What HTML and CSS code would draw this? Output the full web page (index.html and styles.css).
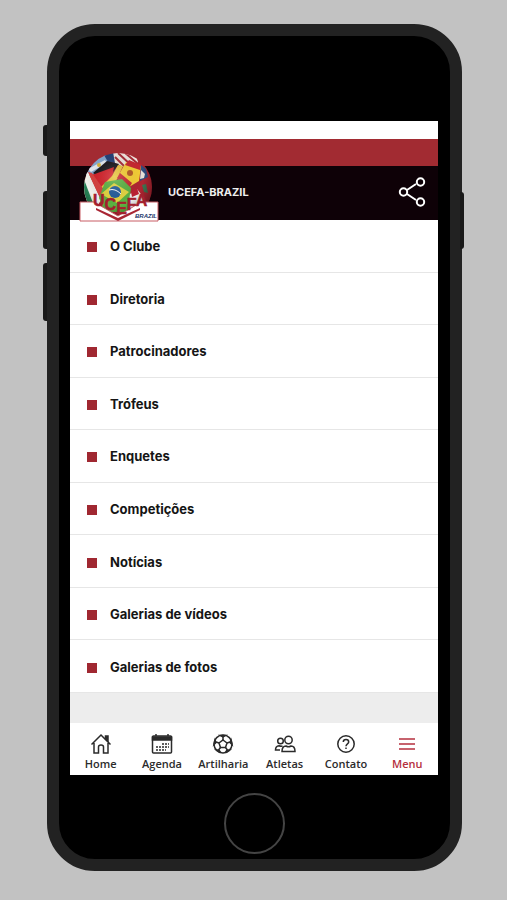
FILE: index.html
```html
<!DOCTYPE html>
<html lang="pt-BR">
<head>
<meta charset="utf-8">
<meta name="viewport" content="width=device-width, initial-scale=1">
<title>UCEFA-BRAZIL</title>
<link rel="stylesheet" href="styles.css">
</head>
<body>
<div class="phone">
  <span class="key key-mute"></span>
  <span class="key key-up"></span>
  <span class="key key-down"></span>
  <span class="key key-power"></span>
  <div class="screen">
    <div class="statusbar"></div>
    <header class="header">
      <div class="stripe"></div>
      <div class="titlebar">
        <svg class="crest" viewBox="0 0 80 70" role="img" aria-label="UCEFA Brazil">
          <defs>
            <clipPath id="ball"><circle cx="39" cy="35" r="34"/></clipPath>
            <radialGradient id="shade" cx="45%" cy="35%" r="60%">
              <stop offset="0" stop-color="#fff" stop-opacity=".2"/>
              <stop offset=".7" stop-color="#000" stop-opacity="0"/>
              <stop offset="1" stop-color="#000" stop-opacity=".3"/>
            </radialGradient>
          </defs>
          <g clip-path="url(#ball)">
            <rect width="80" height="70" fill="#b02632"/>
            <path d="M3 24 12 7 27 2 31 11 18 22Z" fill="#84a7cf"/>
            <path d="M9 17 26 8 28 11 12 20Z" fill="#e5eaf0"/>
            <circle cx="20" cy="13" r="2" fill="#d9b33b"/>
            <path d="M25 3 34 0 41 5 36 11 29 10Z" fill="#244077"/>
            <path d="M34 0 56 1 59 10 48 17 36 11Z" fill="#eee4dd"/>
            <path d="M39 1 53 14M45 0 58 11M36 5 48 17" stroke="#a82b36" stroke-width="2"/>
            <path d="M14 21 28 9 40 12 34 20 20 25Z" fill="#17151a"/>
            <path d="M13 23 35 15 33 26 24 35 18 33Z" fill="#d42029"/>
            <path d="M22 35 33 24 39 13 44 14 37 29 25 37Z" fill="#e8c53a"/>
            <path d="M1 24 9 20 22 48 19 53 6 52Z" fill="#f0f0ea"/>
            <path d="M0 27 4 25 14 51 3 51Z" fill="#29875a"/>
            <path d="M9 20 13 21 25 38 23 50Z" fill="#d8423f"/>
            <path d="M38 26 47 10 62 14 60 29 50 35Z" fill="#f5cf35"/>
            <path d="M38 26 41 21 53 31 50 36Z" fill="#c72731"/>
            <path d="M46 13 50 8 62 13 61 18Z" fill="#c72731"/>
            <circle cx="51" cy="21" r="3" fill="#b65a24"/>
            <path d="M62 13 67 17 69 25 61 29Z" fill="#304d80"/>
            <path d="M62 18 66 22 65 26 61 27Z" fill="#e7e0da"/>
            <path d="M20 46 26 30 43 27 52 36 49 60 26 60Z" fill="#5bb242"/>
            <path d="M22 42 35 31 50 40 38 51Z" fill="#e4d640"/>
            <circle cx="36" cy="40" r="6" fill="#245e9d"/>
            <path d="M30 38Q36 36 42 42" stroke="#fff" fill="none"/>
            <path d="M51 42 58 37 65 46 62 58 49 58Z" fill="#eee"/>
            <path d="M52 40 58 36 60 42 53 45Z" fill="#bb2033"/>
            <path d="M63 33 67 32 69 41 65 40Z" fill="#3e7652"/>
            <circle cx="39" cy="35" r="34" fill="url(#shade)"/>
          </g>
          <path d="M1 50H15L39 64 62 50H79V69H1Z" fill="#fff" stroke="#c85d65"/>
          <path d="M17 56 39 66 61 56V58L39 69 17 58Z" fill="#a92634"/>
          <text class="crest-name" x="14" y="54">U<tspan dy="4">C</tspan><tspan dy="4">E</tspan><tspan dy="-4">F</tspan><tspan dy="-4">A</tspan></text>
          <text class="crest-country" x="56" y="66">BRAZIL</text>
        </svg>
        <h1 class="title">UCEFA-BRAZIL</h1>
        <button class="share" type="button" aria-label="Compartilhar">
          <svg viewBox="0 0 28 30"><path d="M9 13 18 7M9 17 18 23"/><circle cx="5.500" cy="15" r="3.700"/><circle cx="22.500" cy="5" r="3.700"/><circle cx="22.500" cy="25" r="3.700"/></svg>
        </button>
      </div>
    </header>
    <main class="content">
      <ul class="menu">
        <li><a href="#clube">O Clube</a></li>
        <li><a href="#diretoria">Diretoria</a></li>
        <li><a href="#patrocinadores">Patrocinadores</a></li>
        <li><a href="#trofeus">Trófeus</a></li>
        <li><a href="#enquetes">Enquetes</a></li>
        <li><a href="#competicoes">Competições</a></li>
        <li><a href="#noticias">Notícias</a></li>
        <li><a href="#videos">Galerias de vídeos</a></li>
        <li><a href="#fotos">Galerias de fotos</a></li>
      </ul>
    </main>
    <nav class="tabs">
      <a href="#home"><svg viewBox="0 0 22 22"><path d="M1.500 11.500 11 2 20.500 11.500M4 10V20H8.500V14Q8.500 12 11 12T13.500 14V20H18V10"/><path d="M15.500 3H18V8L15.500 6Z" fill="currentColor"/></svg>Home</a>
      <a href="#agenda"><svg viewBox="0 0 22 22"><rect x="1.500" y="3" width="19" height="17" rx="1"/><path d="M1.500 4H20.500V7H1.500Z" fill="currentColor"/><path d="M5 1V4M17 1V4M11 11H18M5 14H18M5 17H15" stroke-dasharray="2 1"/></svg>Agenda</a>
      <a href="#artilharia"><svg viewBox="0 0 22 22"><circle cx="11" cy="11" r="9"/><path d="M11 7 15 10 13.500 14.500H8.500L7 10Z"/><path d="M11 7V4M15 10 18 9M13.500 14.500 15.500 17M8.500 14.500 6.500 17M7 10 4 9"/><path d="M8.500 2.500 11 4 13.500 2.500ZM19 7 18 9.500 20 11.500ZM17.500 17 15 17 13.500 19.500ZM4.500 17 7 17 8.500 19.500ZM3 7 4 9.500 2 11.500Z" fill="currentColor"/></svg>Artilharia</a>
      <a href="#atletas"><svg viewBox="0 0 22 22"><circle cx="14.500" cy="7" r="3.700"/><path d="M8 18.500Q8 13 12 13Q14.500 14.500 17 13Q21 13 21 18.500Z"/><circle cx="6.500" cy="8" r="2.800"/><path d="M8.500 13Q7 13.500 5 12.700Q1.500 13 1.500 17H6"/></svg>Atletas</a>
      <a href="#contato"><svg viewBox="0 0 22 22"><circle cx="11" cy="11" r="8.200"/><path d="M8.300 9Q8.300 6.500 11 6.500T13.700 9C13.700 11 11 10.800 11 13.300M11 14.500V16"/></svg>Contato</a>
      <a class="active" href="#menu" aria-current="page"><svg viewBox="0 0 22 22"><path d="M3 6H19M3 11H19M3 16H19"/></svg>Menu</a>
    </nav>
  </div>
  <button class="home" type="button" aria-label="Início"></button>
</div>
</body>
</html>
```
FILE: styles.css
```css
* { box-sizing: border-box; }

body {
  display: flex;
  min-height: 100vh;
  margin: 0;
  padding: 24px 45px 29px 47px;
  background: #c2c2c2;
  font-family: Inter, "Liberation Sans", sans-serif;
  color: #151515;
}

.phone {
  position: relative;
  flex: 1;
  display: flex;
  flex-direction: column;
  align-items: center;
  padding: 85px 12px 5px 11px;
  border: 12px solid #222;
  border-radius: 48px;
  background: #000;
}

.key {
  position: absolute;
  left: -16px;
  width: 4px;
  border-radius: 3px 0 0 3px;
  background: #191919;
}
.key-mute { top: 89px; height: 31px; }
.key-up { top: 155px; height: 58px; }
.key-down { top: 227px; height: 58px; }
.key-power {
  top: 156px;
  left: auto;
  right: -14px;
  height: 57px;
  border-radius: 0 3px 3px 0;
}

.screen {
  flex: 1;
  display: flex;
  flex-direction: column;
  width: 100%;
  background: #fff;
}

.statusbar { height: 18px; }
.stripe { height: 27px; background: #a22b32; }

.titlebar {
  position: relative;
  display: flex;
  align-items: center;
  justify-content: space-between;
  height: 54px;
  padding: 0 12px 2px 98px;
  background: #0e0107;
}

.crest {
  position: absolute;
  left: 9px;
  bottom: -2px;
  width: 80px;
  height: 70px;
}
.crest-name {
  font: 700 16px "Liberation Sans", sans-serif;
  fill: #a3202e;
  stroke: #a3202e;
  stroke-width: 0.5px;
}
.crest-country {
  font: italic 700 6px "Liberation Sans", sans-serif;
  fill: #26376c;
}

.title {
  margin: 0;
  font-size: 11px;
  line-height: 16px;
  font-weight: 700;
  color: #eee;
}

.share {
  width: 28px;
  height: 30px;
  padding: 0;
  border: 0;
  background: none;
}
.share svg {
  display: block;
  fill: none;
  stroke: #fff;
  stroke-width: 2;
}

.content {
  flex: 1;
  display: flex;
  flex-direction: column;
  padding-bottom: 30px;
  background: #ededed;
}

.menu {
  flex: 1;
  display: grid;
  grid-auto-rows: 1fr;
  margin: 0;
  padding: 0;
  list-style: none;
  background: #fff;
}
.menu li { display: flex; border-bottom: 1px solid #e6e6e6; }
.menu a {
  flex: 1;
  display: flex;
  align-items: center;
  gap: 13px;
  padding: 1px 17px 0;
  font-size: 13px;
  line-height: 18px;
  font-weight: 700;
  color: inherit;
  text-decoration: none;
}
.menu a::before {
  content: "";
  width: 10px;
  height: 10px;
  margin-top: 2px;
  background: #a02831;
}

.tabs {
  display: grid;
  grid-template-columns: repeat(6, 1fr);
  height: 52px;
}
.tabs a {
  display: flex;
  flex-direction: column;
  align-items: center;
  padding-top: 10px;
  font: 600 11px/18px "Open Sans", sans-serif;
  color: #2b2b2b;
  text-decoration: none;
}
.tabs .active { color: #b5303f; }
.tabs svg {
  width: 22px;
  height: 22px;
  fill: none;
  stroke: currentColor;
  stroke-width: 1.5;
}

.home {
  width: 61px;
  height: 61px;
  margin-top: 18px;
  border: 2px solid #444;
  border-radius: 50%;
  background: #000;
}
```
